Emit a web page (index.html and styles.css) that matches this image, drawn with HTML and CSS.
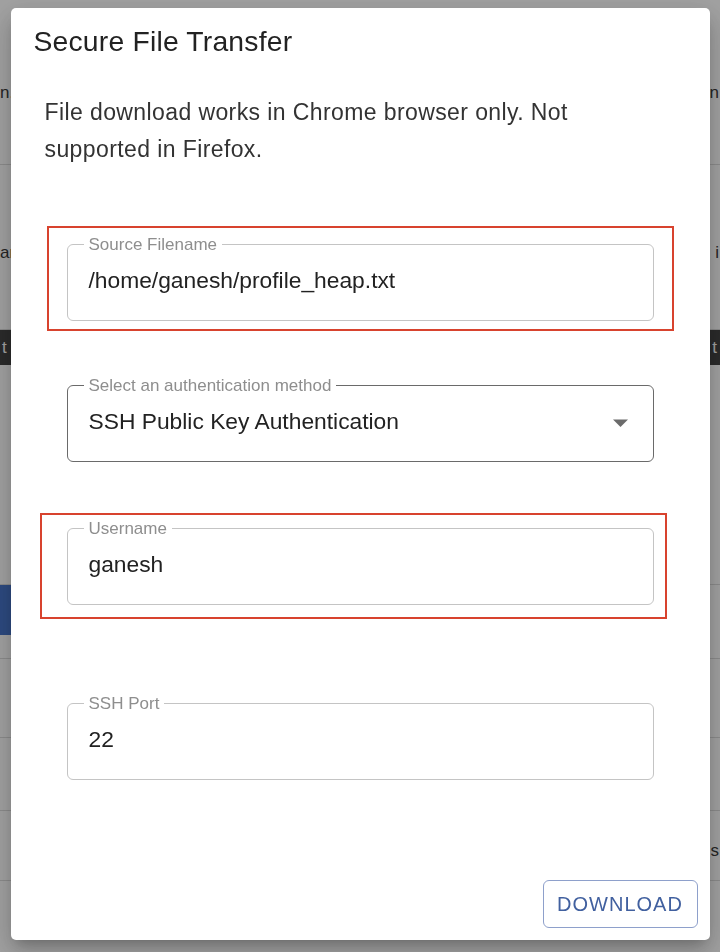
FILE: index.html
```html
<!DOCTYPE html>
<html lang="en">
<head>
<meta charset="utf-8">
<title>Secure File Transfer</title>
<link rel="stylesheet" href="styles.css">
</head>
<body>
<div class="page">
  <div class="prow r1"><span class="pl">n.</span><span class="pr">n</span></div>
  <div class="prow r2"><span class="pl">ar</span><span class="pr">i</span></div>
  <div class="prow r3"><span class="pl">t</span><span class="pr">t</span></div>
  <div class="prow r4"></div>
  <div class="prow r5"><span class="blue"></span></div>
  <div class="prow r6"></div>
  <div class="prow r7"></div>
  <div class="prow r8"></div>
  <div class="prow r9"><span class="pl"></span><span class="pr">s</span></div>
</div>
<div class="backdrop">
  <div class="dialog" role="dialog" aria-labelledby="dlg-title">
    <h2 class="title" id="dlg-title">Secure File Transfer</h2>
    <p class="desc">File download works in Chrome browser only. Not supported in Firefox.</p>
    <div class="mark mark-a">
      <fieldset class="field">
        <legend>Source Filename</legend>
        <div class="value">/home/ganesh/profile_heap.txt</div>
      </fieldset>
    </div>
    <fieldset class="field field-select">
      <legend>Select an authentication method</legend>
      <div class="value value-row">
        <span>SSH Public Key Authentication</span>
        <svg class="arrow" width="15" height="8" viewBox="0 0 15 8" aria-hidden="true"><path d="M0 0.5 L15 0.5 L7.5 8 Z"/></svg>
      </div>
    </fieldset>
    <div class="mark mark-b">
      <fieldset class="field">
        <legend>Username</legend>
        <div class="value">ganesh</div>
      </fieldset>
    </div>
    <fieldset class="field field-port">
      <legend>SSH Port</legend>
      <div class="value">22</div>
    </fieldset>
    <div class="actions">
      <button class="btn" type="button">Download</button>
    </div>
  </div>
</div>
</body>
</html>
```
FILE: styles.css
```css
html, body {
  margin: 0;
  padding: 0;
}
body {
  width: 720px;
  height: 952px;
  overflow: hidden;
  background: #ffffff;
  font-family: "Liberation Sans", Arial, Helvetica, sans-serif;
}

/* underlying page (dimmed by the backdrop) */
.page {
  display: flex;
  flex-direction: column;
}
.prow {
  display: flex;
  justify-content: space-between;
  align-items: center;
  box-sizing: border-box;
  border-bottom: 1px solid #dcdcdc;
  font-size: 17px;
  color: #3a3a3a;
}
.pl {
  white-space: nowrap;
}
.pr {
  white-space: nowrap;
  margin-right: 1px;
}
.r1 { height: 165px; padding-top: 22px; }
.r2 { height: 165px; padding-top: 12px; }
.r3 { height: 35px; background: #434343; color: #fff; border-bottom: 0; padding: 0 2px; }
.r4 { height: 220px; }
.r5 { height: 50px; border-bottom: 0; }
.blue { width: 40px; height: 50px; background: #4775cb; }
.r6 { height: 24px; }
.r7 { height: 79px; }
.r8 { height: 73px; }
.r9 { height: 70px; padding-top: 10px; }

/* modal */
.backdrop {
  position: fixed;
  inset: 0;
  background: rgba(0, 0, 0, 0.37);
  display: flex;
  justify-content: center;
  align-items: flex-start;
  padding-top: 8px;
}
.dialog {
  width: 699px;
  height: 932px;
  box-sizing: border-box;
  background: #fff;
  border-radius: 5px;
  box-shadow: 0 8px 12px -6px rgba(0,0,0,0.22), 0 14px 24px 2px rgba(0,0,0,0.12), 0 6px 30px 4px rgba(0,0,0,0.10);
  display: flex;
  flex-direction: column;
  align-items: flex-start;
}
.title {
  margin: 0;
  padding: 14px 0 0 23px;
  font-size: 28.3px;
  font-weight: 400;
  line-height: 38px;
  letter-spacing: 0.2px;
  color: #222;
}
.desc {
  margin: 34px 0 0 34px;
  width: 610px;
  font-size: 23px;
  line-height: 37px;
  letter-spacing: 0.4px;
  color: #333;
}
.mark {
  box-sizing: border-box;
  width: 627px;
  border: 2px solid #d8432e;
}
.mark-a {
  margin: 58px 0 0 36px;
  padding: 8px 18px 8px 18px;
}
.mark-b {
  margin: 51px 0 0 29px;
  padding: 5px 11px 12px 25px;
}
.field {
  margin: 0;
  min-width: 0;
  width: 587px;
  box-sizing: border-box;
  border: 1.4px solid #c4c4c4;
  border-radius: 6px;
  padding: 14px 21px 26px;
}
.field legend {
  font-size: 17px;
  line-height: 17px;
  padding: 0 5px;
  margin-left: -5px;
  color: #8e8e8e;
}
.field-select {
  margin: 46px 0 0 56px;
  border-color: #6a6a6a;
}
.field-port {
  margin: 76px 0 0 56px;
}
.value {
  font-size: 22.8px;
  line-height: 27px;
  color: #222;
}
.value-row {
  display: flex;
  justify-content: space-between;
  align-items: center;
}
.arrow {
  margin-right: 4px;
  margin-top: 2px;
  fill: #6b6b6b;
}
.actions {
  margin-top: auto;
  align-self: stretch;
  display: flex;
  justify-content: flex-end;
  padding: 0 12px 12px 0;
}
.btn {
  width: 155px;
  height: 48px;
  box-sizing: border-box;
  border: 1.4px solid #8ea0cb;
  border-radius: 6px;
  background: #fff;
  color: #41609f;
  font-family: "Liberation Sans", Arial, Helvetica, sans-serif;
  font-size: 20px;
  letter-spacing: 1px;
  text-transform: uppercase;
  padding: 0;
  cursor: pointer;
}
```
